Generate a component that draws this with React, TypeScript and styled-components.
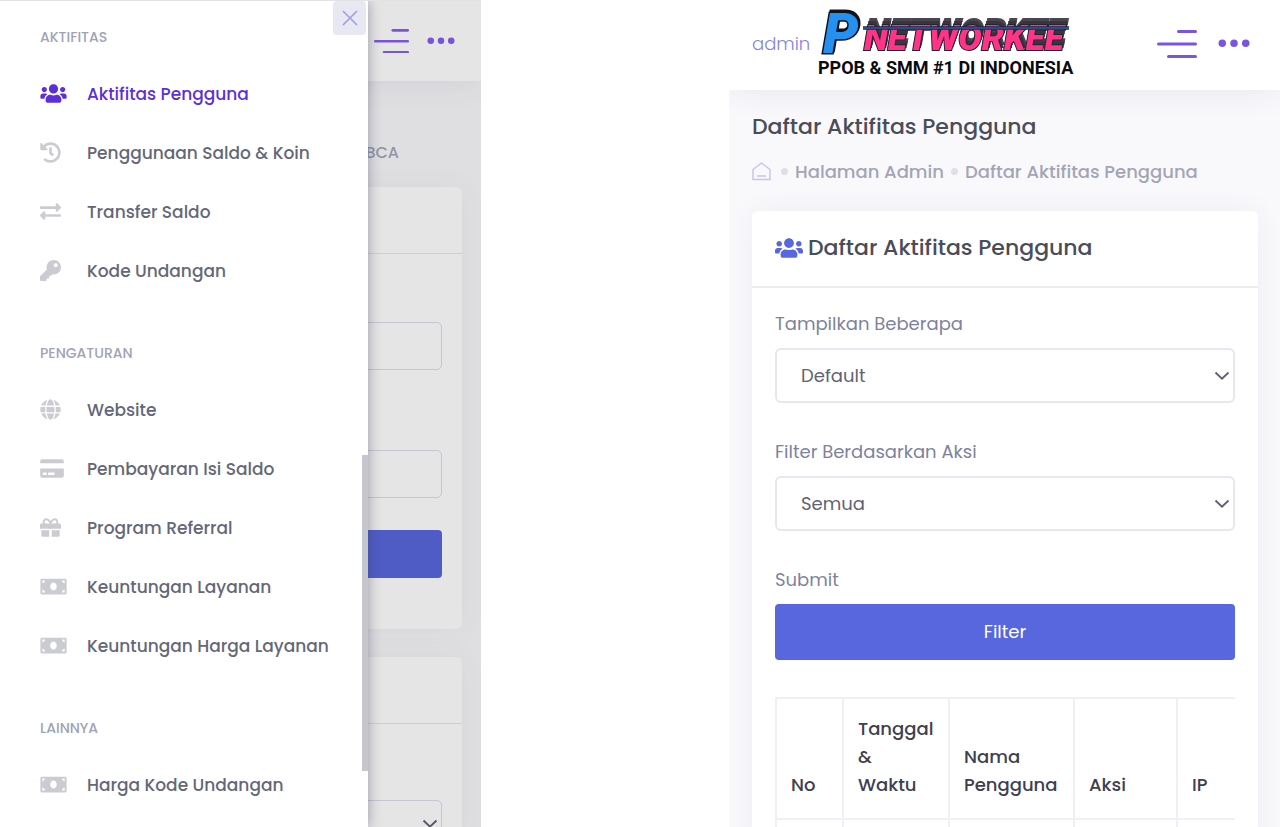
import React from "react";
import styled, { createGlobalStyle } from "styled-components";
import {
  FaUsers,
  FaHistory,
  FaExchangeAlt,
  FaKey,
  FaGlobe,
  FaCreditCard,
  FaGift,
  FaMoneyBill,
} from "react-icons/fa";
import type { IconType } from "react-icons";

const GlobalStyle = createGlobalStyle`
  *, *::before, *::after { box-sizing: border-box; }
  body {
    margin: 0;
    background: #fff;
    color: #575962;
    font-family: Poppins, Inter, "Open Sans", sans-serif;
    font-size: 18px;
  }
  button, select, input { font: inherit; }
  h1, h2, h3, ul, ol { margin: 0; padding: 0; font-weight: 500; list-style: none; }
`;

const Screens = styled.div`
  display: grid;
  grid-template-columns: 481fr 551fr;
  column-gap: 19.375%;
  height: 100vh;
  overflow: hidden;
`;

/* ---------- shared pieces ---------- */

const Screen = styled.div`
  position: relative;
  min-width: 0;
  overflow: hidden;
  background: #f9f9fc;
`;

const TopBar = styled.header<{ $compact?: boolean }>`
  display: flex;
  align-items: center;
  gap: ${(p) => (p.$compact ? 18 : 21)}px;
  height: ${(p) => (p.$compact ? 80 : 90)}px;
  padding: ${(p) => (p.$compact ? "0 26px" : "0 30px 3px 23px")};
  background: #fff;
  box-shadow: 0 0 32px rgba(72, 70, 100, 0.1);
`;

const IconButton = styled.button<{ $bright?: boolean }>`
  display: flex;
  padding: 0;
  border: 0;
  background: none;
  color: ${(p) => (p.$bright ? "#875ef2" : "#7a55dd")};
  cursor: pointer;
`;

const Card = styled.section`
  border-radius: 6px;
  background: #fff;
  box-shadow: 0 0 28px rgba(72, 70, 100, 0.06);
`;

const MenuIcon = ({ width }: { width: number }) => (
  <svg width={width} height={(width * 28) / 40} viewBox="0 0 40 28" fill="currentColor" aria-hidden="true">
    <rect x="20" y="0" width="20" height="3" rx="1.5" />
    <rect x="0" y="12.5" width="40" height="3" rx="1.5" />
    <rect x="10" y="25" width="30" height="3" rx="1.5" />
  </svg>
);

const DotsIcon = ({ width }: { width: number }) => (
  <svg width={width} height={(width * 8) / 30} viewBox="0 0 30 8" fill="currentColor" aria-hidden="true">
    <circle cx="4" cy="4" r="3.5" />
    <circle cx="15" cy="4" r="3.5" />
    <circle cx="26" cy="4" r="3.5" />
  </svg>
);

const Chevron = () => (
  <svg width="16" height="10" viewBox="0 0 16 10" fill="none" stroke="#5c5f70" strokeWidth="1.8" aria-hidden="true">
    <path d="M1.5 1.5l6.5 6.2 6.5-6.2" />
  </svg>
);

/* ---------- left screen: open drawer ---------- */

const LeftScreen = styled(Screen)`
  border-top: 1px solid #e2e2e4;
`;

const Pusher = styled.span`
  flex: 1;
`;

const BackCrumb = styled.p`
  margin: 0;
  padding: 60px 82px 22px 0;
  color: #a3a5b8;
  font-size: 16px;
  font-weight: 500;
  line-height: 24px;
  text-align: right;
`;

const BackCard = styled(Card)`
  margin: 0 19px 28px;
`;

const BackCardHead = styled.div`
  height: 67px;
  border-bottom: 1px solid #e6e7ee;
`;

const BackFields = styled.div`
  display: flex;
  flex-direction: column;
  padding: 68px 20px 51px;
`;

const BackInput = styled.input`
  width: 100%;
  height: 48px;
  margin-bottom: 80px;
  border: 1px solid #dcdde8;
  border-radius: 5px;
  background: #fff;

  &:last-of-type { margin-bottom: 32px; }
`;

const BackSubmit = styled.button`
  height: 48px;
  border: 0;
  border-radius: 4px;
  background: #5867dd;
`;

const BackSelect = styled.div`
  display: flex;
  align-items: center;
  justify-content: flex-end;
  height: 48px;
  margin: 76px 20px 40px;
  padding-right: 3px;
  border: 1px solid #dcdde8;
  border-radius: 5px;
`;

const Shade = styled.div`
  position: absolute;
  inset: 0;
  background: rgba(0, 0, 0, 0.1);
`;

const Drawer = styled.aside`
  position: absolute;
  inset: 0 auto 0 0;
  width: 368px;
  padding: 24px 0 0 40px;
  background: #fff;
  box-shadow: 0 0 12px rgba(60, 60, 90, 0.45);
`;

const CloseButton = styled.button`
  position: absolute;
  top: 0;
  right: 2px;
  display: flex;
  align-items: center;
  justify-content: center;
  width: 33px;
  height: 34px;
  padding: 0;
  border: 0;
  border-radius: 4px;
  background: #e8e8f3;
  color: #9c9fe0;
`;

const ScrollThumb = styled.div`
  position: absolute;
  top: 55%;
  right: 0;
  width: 6px;
  height: 316px;
  background: #c6c6cd;
`;

const GroupTitle = styled.h3`
  color: #a0a3b8;
  font-size: 14px;
  font-weight: 500;
  line-height: 24px;
  text-transform: uppercase;
`;

const MenuList = styled.ul`
  padding: 15px 0 41px;
`;

const MenuLink = styled.a<{ $active?: boolean; $iconWidth: number }>`
  display: grid;
  grid-template-columns: 47px 1fr;
  align-items: center;
  height: 59px;
  color: ${(p) => (p.$active ? "#5d2fd9" : "#646778")};
  font-size: 17px;
  font-weight: 500;
  text-decoration: none;
  white-space: nowrap;

  svg {
    width: ${(p) => p.$iconWidth}px;
    height: 21px;
    color: ${(p) => (p.$active ? "#5d2fd9" : "#cbcbd2")};
  }
`;

type Item = { label: string; icon: IconType; iconWidth: number; active?: boolean };

const groups: { title: string; items: Item[] }[] = [
  {
    title: "Aktifitas",
    items: [
      { label: "Aktifitas Pengguna", icon: FaUsers, iconWidth: 27, active: true },
      { label: "Penggunaan Saldo & Koin", icon: FaHistory, iconWidth: 21 },
      { label: "Transfer Saldo", icon: FaExchangeAlt, iconWidth: 21 },
      { label: "Kode Undangan", icon: FaKey, iconWidth: 21 },
    ],
  },
  {
    title: "Pengaturan",
    items: [
      { label: "Website", icon: FaGlobe, iconWidth: 21 },
      { label: "Pembayaran Isi Saldo", icon: FaCreditCard, iconWidth: 24 },
      { label: "Program Referral", icon: FaGift, iconWidth: 21 },
      { label: "Keuntungan Layanan", icon: FaMoneyBill, iconWidth: 27 },
      { label: "Keuntungan Harga Layanan", icon: FaMoneyBill, iconWidth: 27 },
    ],
  },
  {
    title: "Lainnya",
    items: [{ label: "Harga Kode Undangan", icon: FaMoneyBill, iconWidth: 27 }],
  },
];

const DrawerScreen = () => (
  <LeftScreen>
    <TopBar $compact>
      <Pusher />
      <IconButton $bright aria-label="Menu">
        <MenuIcon width={35} />
      </IconButton>
      <IconButton $bright aria-label="Lainnya">
        <DotsIcon width={28} />
      </IconButton>
    </TopBar>
    <BackCrumb>BCA</BackCrumb>
    <BackCard>
      <BackCardHead />
      <BackFields>
        <BackInput aria-label="Tampilkan Beberapa" />
        <BackInput aria-label="Filter" />
        <BackSubmit aria-label="Filter" />
      </BackFields>
    </BackCard>
    <BackCard>
      <BackCardHead />
      <BackSelect>
        <Chevron />
      </BackSelect>
    </BackCard>
    <Shade />
    <Drawer>
      <nav>
        {groups.map((group) => (
          <React.Fragment key={group.title}>
            <GroupTitle>{group.title}</GroupTitle>
            <MenuList>
              {group.items.map(({ label, icon: Icon, iconWidth, active }) => (
                <li key={label}>
                  <MenuLink href="#" $active={active} $iconWidth={iconWidth}>
                    <Icon />
                    {label}
                  </MenuLink>
                </li>
              ))}
            </MenuList>
          </React.Fragment>
        ))}
      </nav>
      <CloseButton aria-label="Tutup">
        <svg width="16" height="16" viewBox="0 0 16 16" stroke="currentColor" strokeWidth="1.6" aria-hidden="true">
          <path d="M1 1l14 14M15 1L1 15" />
        </svg>
      </CloseButton>
      <ScrollThumb />
    </Drawer>
  </LeftScreen>
);

/* ---------- right screen: activity list ---------- */

const AdminLink = styled.a`
  color: #8583e0;
  font-size: 18px;
  font-weight: 300;
  text-decoration: none;
`;

const LogoLink = styled.a`
  display: flex;
  margin-left: -15px;
`;

const Page = styled.main`
  padding: 0 22px 0 23px;
`;

const PageTitle = styled.h1`
  padding-top: 20px;
  color: #4a4c59;
  font-size: 22px;
  line-height: 34px;
`;

const Crumbs = styled.ol`
  display: flex;
  align-items: center;
  gap: 7px;
  height: 28px;
  margin: 13px 0 26px;
  color: #a3a5b6;
  font-weight: 500;
  white-space: nowrap;

  a { display: flex; color: inherit; text-decoration: none; }
`;

const CrumbDot = styled.li`
  width: 7px;
  height: 7px;
  border-radius: 50%;
  background: #dfdfe6;
`;

const HomeCrumb = styled.li`
  margin-right: 3px;
  color: #c6c5ea;
`;

const CardHead = styled.div`
  display: flex;
  align-items: center;
  gap: 5px;
  height: 77px;
  padding: 0 23px 2px;
  border-bottom: 2px solid #ebecf1;
  color: #4a4c59;

  svg { color: #5867dd; }
`;

const CardTitle = styled.h2`
  font-size: 22px;
`;

const Form = styled.form`
  display: flex;
  flex-direction: column;
  padding: 22px 23px 37px;
`;

const Label = styled.label`
  margin-bottom: 10px;
  color: #7d82a0;
  line-height: 28px;
`;

const SelectBox = styled.div`
  display: flex;
  align-items: center;
  margin-bottom: 35px;

  svg { margin-left: -21px; pointer-events: none; }
`;

const Select = styled.select`
  width: 100%;
  height: 55px;
  padding: 0 24px;
  border: 2px solid #e6e7f0;
  border-radius: 6px;
  appearance: none;
  background: #fff;
  color: #5f6174;
`;

const Submit = styled.button`
  height: 56px;
  padding: 0 24px 2px;
  border: 0;
  border-radius: 4px;
  background: #5867dd;
  color: #fff;
`;

const TableScroll = styled.div`
  margin: 0 23px;
  overflow: hidden;
`;

const Table = styled.table`
  width: 506px;
  table-layout: fixed;
  border-collapse: collapse;

  col:nth-child(1) { width: 67px; }
  col:nth-child(2) { width: 106px; }
  col:nth-child(3) { width: 125px; }
  col:nth-child(4) { width: 103px; }

  th, td {
    padding: 16px 15px 19px 14px;
    border: 2px solid #efeff4;
    color: #3e4050;
    font-weight: 500;
    line-height: 28px;
    text-align: left;
    vertical-align: bottom;
  }
`;

const Wordmark = styled.g`
  font-family: Roboto, sans-serif;
  font-style: italic;
  font-weight: 900;
  paint-order: stroke;
  stroke-linejoin: miter;
`;

const PinkWord = styled.text`
  fill: #ff3387;
  stroke: #262433;
  stroke-width: 2px;
  filter: drop-shadow(1px -3px 0 #3a3440) drop-shadow(1px -3px 0 #4a4650);
`;

const BlueLetter = styled.text`
  fill: #2491f0;
  stroke: #12121c;
  stroke-width: 3px;
  filter: drop-shadow(1px -2px 0 #12121c);
`;

const Logo = () => (
  <svg width="260" height="70" viewBox="0 0 260 70" role="img" aria-label="PNETWORKEE">
    <Wordmark>
      <PinkWord x="48" y="41" fontSize="35">
        NETWORKEE
      </PinkWord>
      <BlueLetter x="7" y="44" fontSize="56">
        P
      </BlueLetter>
    </Wordmark>
    <path d="M47 19H253" stroke="#1c2440" strokeWidth="3.4" />
    <path d="M47 19H253" stroke="#2f7fc4" strokeWidth="1.2" />
    <text x="2" y="65" fontFamily="Roboto, sans-serif" fontSize="18" fontWeight="700" fill="#0b0b0f">
      PPOB &amp; SMM #1 DI INDONESIA
    </text>
  </svg>
);

const ListScreen = () => (
  <Screen>
    <TopBar>
      <AdminLink href="#">admin</AdminLink>
      <LogoLink href="#">
        <Logo />
      </LogoLink>
      <Pusher />
      <IconButton aria-label="Menu">
        <MenuIcon width={40} />
      </IconButton>
      <IconButton aria-label="Lainnya">
        <DotsIcon width={32} />
      </IconButton>
    </TopBar>
    <Page>
      <PageTitle>Daftar Aktifitas Pengguna</PageTitle>
      <Crumbs>
        <HomeCrumb>
          <a href="#" aria-label="Beranda">
            <svg width="19" height="19" viewBox="0 0 19 19" fill="none" stroke="currentColor" strokeWidth="1.5" aria-hidden="true">
              <path d="M1 17.5V7.5L9.5 1 18 7.5V17.5ZM5 14h9" />
            </svg>
          </a>
        </HomeCrumb>
        <CrumbDot />
        <li>
          <a href="#">Halaman Admin</a>
        </li>
        <CrumbDot />
        <li>
          <a href="#">Daftar Aktifitas Pengguna</a>
        </li>
      </Crumbs>
      <Card>
        <CardHead>
          <FaUsers size={28} />
          <CardTitle>Daftar Aktifitas Pengguna</CardTitle>
        </CardHead>
        <Form onSubmit={(e) => e.preventDefault()}>
          <Label htmlFor="limit">Tampilkan Beberapa</Label>
          <SelectBox>
            <Select id="limit">
              <option>Default</option>
            </Select>
            <Chevron />
          </SelectBox>
          <Label htmlFor="action">Filter Berdasarkan Aksi</Label>
          <SelectBox>
            <Select id="action">
              <option>Semua</option>
            </Select>
            <Chevron />
          </SelectBox>
          <Label htmlFor="submit">Submit</Label>
          <Submit id="submit">Filter</Submit>
        </Form>
        <TableScroll>
          <Table>
            <colgroup>
              <col />
              <col />
              <col />
              <col />
              <col />
            </colgroup>
            <thead>
              <tr>
                <th>No</th>
                <th>Tanggal &amp; Waktu</th>
                <th>Nama Pengguna</th>
                <th>Aksi</th>
                <th>IP</th>
              </tr>
            </thead>
            <tbody>
              <tr>
                <td />
                <td />
                <td />
                <td />
                <td />
              </tr>
            </tbody>
          </Table>
        </TableScroll>
      </Card>
    </Page>
  </Screen>
);

export default function App() {
  return (
    <>
      <GlobalStyle />
      <Screens>
        <DrawerScreen />
        <ListScreen />
      </Screens>
    </>
  );
}
